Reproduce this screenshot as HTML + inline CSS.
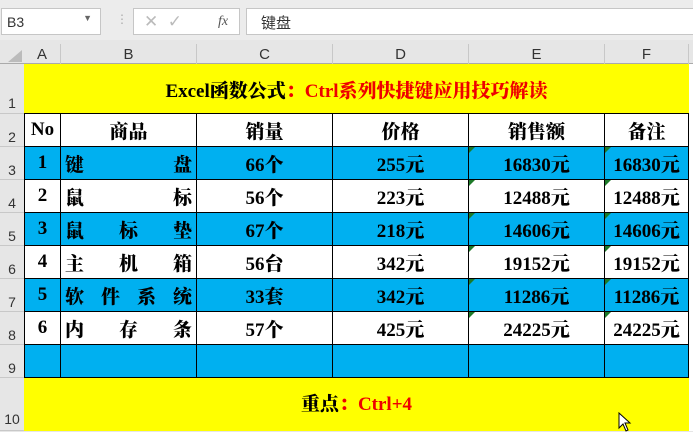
<!DOCTYPE html><html><head><meta charset="utf-8"><style>
*{margin:0;padding:0;box-sizing:border-box}
body{width:693px;height:431px;overflow:hidden;background:#e6e6e6;position:relative;font-family:"Liberation Serif","Noto Serif CJK SC",serif}
.a{position:absolute}
.box{position:absolute;background:#fff;border:1px solid #c6c6c6;top:8px;height:27px}
.ch{position:absolute;top:44px;height:20px;font:15px "Liberation Sans",sans-serif;color:#333;text-align:center;line-height:22px;border-right:1px solid #c8c8c8}
.rh{position:absolute;left:0;width:24px;font:14px "Liberation Sans",sans-serif;color:#333;text-align:center;border-bottom:1px solid #c8c8c8;background:#e6e6e6}
.c{position:absolute;border-right:1px solid #000;border-bottom:1px solid #000;font-weight:900;font-size:19px;text-align:center;color:#000;display:flex;align-items:center;justify-content:center}
.b{background:#00b0f0}.w{background:#fff}
.j{justify-content:space-between;padding:0 4px}
.t{position:absolute;top:0;left:0;border-top:6px solid #1d7a28;border-right:6px solid transparent}
</style></head><body>
<div class="a" style="left:0;top:0;width:693px;height:40px;background:#ececec"></div>
<div class="box" style="left:1px;width:100px;font:14px 'Liberation Sans',sans-serif;color:#333;padding:5px 5px">B3<span style="position:absolute;right:8px;top:4px;font-size:9px;color:#666">▼</span></div>
<div class="a" style="left:116px;top:12px;color:#aaa;font-size:12px">⋮</div>
<div class="box" style="left:133px;width:107px;color:#bbb;font:17px 'Liberation Sans',sans-serif;padding:3px 10px">✕ &nbsp;✓ <i style="position:absolute;left:84px;top:5px;font:italic 14px 'Liberation Serif',serif;color:#555">fx</i></div>
<div class="box" style="left:246px;width:450px;font:15px 'Liberation Sans','Noto Sans CJK SC',sans-serif;color:#333;padding:3px 14px">键盘</div>
<div class="a" style="left:0;top:44px;width:693px;height:20px;background:#e6e6e6;border-bottom:1px solid #aaa"></div>
<div class="a" style="left:8px;top:50px;width:0;height:0;border-left:14px solid transparent;border-bottom:12px solid #bbb"></div>
<div class="ch" style="left:24px;width:37px">A</div>
<div class="ch" style="left:61px;width:136px">B</div>
<div class="ch" style="left:197px;width:136px">C</div>
<div class="ch" style="left:333px;width:136px">D</div>
<div class="ch" style="left:469px;width:136px">E</div>
<div class="ch" style="left:605px;width:84px">F</div>
<div class="a" style="left:689px;top:64px;width:4px;height:367px;background:#fff"></div>
<div class="rh" style="top:64px;height:50px;padding-top:31px">1</div>
<div class="rh" style="top:114px;height:33px;padding-top:15px">2</div>
<div class="rh" style="top:147px;height:33px;padding-top:15px">3</div>
<div class="rh" style="top:180px;height:33px;padding-top:15px">4</div>
<div class="rh" style="top:213px;height:33px;padding-top:15px">5</div>
<div class="rh" style="top:246px;height:33px;padding-top:15px">6</div>
<div class="rh" style="top:279px;height:33px;padding-top:15px">7</div>
<div class="rh" style="top:312px;height:33px;padding-top:15px">8</div>
<div class="rh" style="top:345px;height:33px;padding-top:15px">9</div>
<div class="rh" style="top:378px;height:53px;padding-top:33px">10</div>
<div class="a" style="left:24px;top:64px;width:665px;height:50px;background:#ff0;border-bottom:1px solid #000;display:flex;align-items:center;justify-content:center;font-weight:900;font-size:19px;padding-top:2px">Excel函数公式<span style="color:#e00">：Ctrl系列快捷键应用技巧解读</span></div>
<div class="a" style="left:24px;top:378px;width:665px;height:53px;background:#ff0;display:flex;align-items:center;justify-content:center;font-weight:900;font-size:19px;padding-bottom:4px">重点<span style="color:#e00">：Ctrl+4</span></div>
<div class="a" style="left:24px;top:114px;width:1px;height:264px;background:#000"></div>
<div class="c w" style="left:25px;top:114px;width:36px;height:33px">No</div>
<div class="c w" style="left:61px;top:114px;width:136px;height:33px">商品</div>
<div class="c w" style="left:197px;top:114px;width:136px;height:33px">销量</div>
<div class="c w" style="left:333px;top:114px;width:136px;height:33px">价格</div>
<div class="c w" style="left:469px;top:114px;width:136px;height:33px">销售额</div>
<div class="c w" style="left:605px;top:114px;width:84px;height:33px">备注</div>
<div class="c b" style="left:25px;top:147px;width:36px;height:33px">1</div>
<div class="c b j" style="left:61px;top:147px;width:136px;height:33px"><span>键</span><span>盘</span></div>
<div class="c b" style="left:197px;top:147px;width:136px;height:33px">66个</div>
<div class="c b" style="left:333px;top:147px;width:136px;height:33px">255元</div>
<div class="c b" style="left:469px;top:147px;width:136px;height:33px"><i class="t"></i>16830元</div>
<div class="c b" style="left:605px;top:147px;width:84px;height:33px"><i class="t"></i>16830元</div>
<div class="c w" style="left:25px;top:180px;width:36px;height:33px">2</div>
<div class="c w j" style="left:61px;top:180px;width:136px;height:33px"><span>鼠</span><span>标</span></div>
<div class="c w" style="left:197px;top:180px;width:136px;height:33px">56个</div>
<div class="c w" style="left:333px;top:180px;width:136px;height:33px">223元</div>
<div class="c w" style="left:469px;top:180px;width:136px;height:33px"><i class="t"></i>12488元</div>
<div class="c w" style="left:605px;top:180px;width:84px;height:33px"><i class="t"></i>12488元</div>
<div class="c b" style="left:25px;top:213px;width:36px;height:33px">3</div>
<div class="c b j" style="left:61px;top:213px;width:136px;height:33px"><span>鼠</span><span>标</span><span>垫</span></div>
<div class="c b" style="left:197px;top:213px;width:136px;height:33px">67个</div>
<div class="c b" style="left:333px;top:213px;width:136px;height:33px">218元</div>
<div class="c b" style="left:469px;top:213px;width:136px;height:33px"><i class="t"></i>14606元</div>
<div class="c b" style="left:605px;top:213px;width:84px;height:33px"><i class="t"></i>14606元</div>
<div class="c w" style="left:25px;top:246px;width:36px;height:33px">4</div>
<div class="c w j" style="left:61px;top:246px;width:136px;height:33px"><span>主</span><span>机</span><span>箱</span></div>
<div class="c w" style="left:197px;top:246px;width:136px;height:33px">56台</div>
<div class="c w" style="left:333px;top:246px;width:136px;height:33px">342元</div>
<div class="c w" style="left:469px;top:246px;width:136px;height:33px"><i class="t"></i>19152元</div>
<div class="c w" style="left:605px;top:246px;width:84px;height:33px"><i class="t"></i>19152元</div>
<div class="c b" style="left:25px;top:279px;width:36px;height:33px">5</div>
<div class="c b j" style="left:61px;top:279px;width:136px;height:33px"><span>软</span><span>件</span><span>系</span><span>统</span></div>
<div class="c b" style="left:197px;top:279px;width:136px;height:33px">33套</div>
<div class="c b" style="left:333px;top:279px;width:136px;height:33px">342元</div>
<div class="c b" style="left:469px;top:279px;width:136px;height:33px"><i class="t"></i>11286元</div>
<div class="c b" style="left:605px;top:279px;width:84px;height:33px"><i class="t"></i>11286元</div>
<div class="c w" style="left:25px;top:312px;width:36px;height:33px">6</div>
<div class="c w j" style="left:61px;top:312px;width:136px;height:33px"><span>内</span><span>存</span><span>条</span></div>
<div class="c w" style="left:197px;top:312px;width:136px;height:33px">57个</div>
<div class="c w" style="left:333px;top:312px;width:136px;height:33px">425元</div>
<div class="c w" style="left:469px;top:312px;width:136px;height:33px"><i class="t"></i>24225元</div>
<div class="c w" style="left:605px;top:312px;width:84px;height:33px"><i class="t"></i>24225元</div>
<div class="c b" style="left:25px;top:345px;width:36px;height:33px"></div>
<div class="c b" style="left:61px;top:345px;width:136px;height:33px"></div>
<div class="c b" style="left:197px;top:345px;width:136px;height:33px"></div>
<div class="c b" style="left:333px;top:345px;width:136px;height:33px"></div>
<div class="c b" style="left:469px;top:345px;width:136px;height:33px"></div>
<div class="c b" style="left:605px;top:345px;width:84px;height:33px"></div>
<svg class="a" style="left:618px;top:412px" width="14" height="20" viewBox="0 0 14 20"><path d="M1 1 L1 16 L5 12 L8 19 L10 18 L7 11 L12 11 Z" fill="#fff" stroke="#000" stroke-width="1"/></svg>
</body></html>
